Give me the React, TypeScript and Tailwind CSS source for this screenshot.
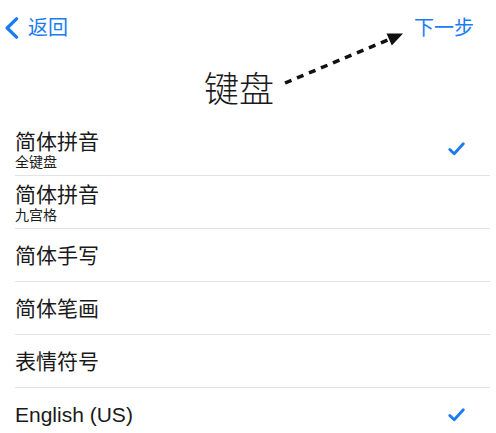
import React from "react";

interface KeyboardItem {
  title: string;
  subtitle?: string;
  checked?: boolean;
}

const items: KeyboardItem[] = [
  { title: "简体拼音", subtitle: "全键盘", checked: true },
  { title: "简体拼音", subtitle: "九宫格" },
  { title: "简体手写" },
  { title: "简体笔画" },
  { title: "表情符号" },
  { title: "English (US)", checked: true },
];

const Check = () => (
  <svg width="17" height="14" viewBox="0 0 17 14" fill="none">
    <path
      d="M1.8 7.5L6.2 11.8L15.3 1.8"
      stroke="#1a7cf2"
      strokeWidth="2.8"
      strokeLinecap="round"
      strokeLinejoin="round"
    />
  </svg>
);

// dashed annotation arrow pointing at 下一步
const Arrow = () => (
  <svg
    className="absolute left-0 top-0 pointer-events-none"
    width="496"
    height="120"
    viewBox="0 0 496 120"
    fill="none"
  >
    <path
      d="M285 83L389 39.5"
      stroke="#111"
      strokeWidth="3.5"
      strokeDasharray="7 6"
    />
    <polygon points="403,33.5 386.5,33.5 391.8,45.5" fill="#111" />
  </svg>
);

export default function App() {
  return (
    <div
      className="relative w-[496px] h-[433px] overflow-hidden bg-white text-[#1a1a1a]"
      style={{ fontFamily: '"Liberation Sans", "Noto Sans CJK SC", sans-serif' }}
    >
      <header className="flex h-[56px] items-center justify-between pl-[5px] pr-[22px] text-[#1a7cf2]">
        <div className="flex items-center gap-[9px]">
          <svg width="14" height="22" viewBox="0 0 14 22" fill="none">
            <path
              d="M11.5 1.8L2.2 11L11.5 20.2"
              stroke="#1a7cf2"
              strokeWidth="3.3"
              strokeLinecap="round"
              strokeLinejoin="round"
            />
          </svg>
          <span className="text-[20px] leading-[24px]">返回</span>
        </div>
        <span className="text-[20px] leading-[24px]">下一步</span>
      </header>

      <div className="flex h-[67px] items-center justify-center pr-[18px]">
        <h1 className="text-[35px] leading-[40px] font-light">键盘</h1>
      </div>

      <ul className="ml-[15px] mr-[6px]">
        {items.map((item, i) => (
          <li
            key={i}
            className={
              "flex h-[53px] items-center justify-between pr-[25px] " +
              (i < items.length - 1 ? "border-b border-[#e3e3e3]" : "")
            }
          >
            <div className="flex flex-col">
              <span className="text-[21px] leading-[25px]">{item.title}</span>
              {item.subtitle && (
                <span className="text-[14px] leading-[16px]">{item.subtitle}</span>
              )}
            </div>
            {item.checked && <Check />}
          </li>
        ))}
      </ul>

      <Arrow />
    </div>
  );
}
